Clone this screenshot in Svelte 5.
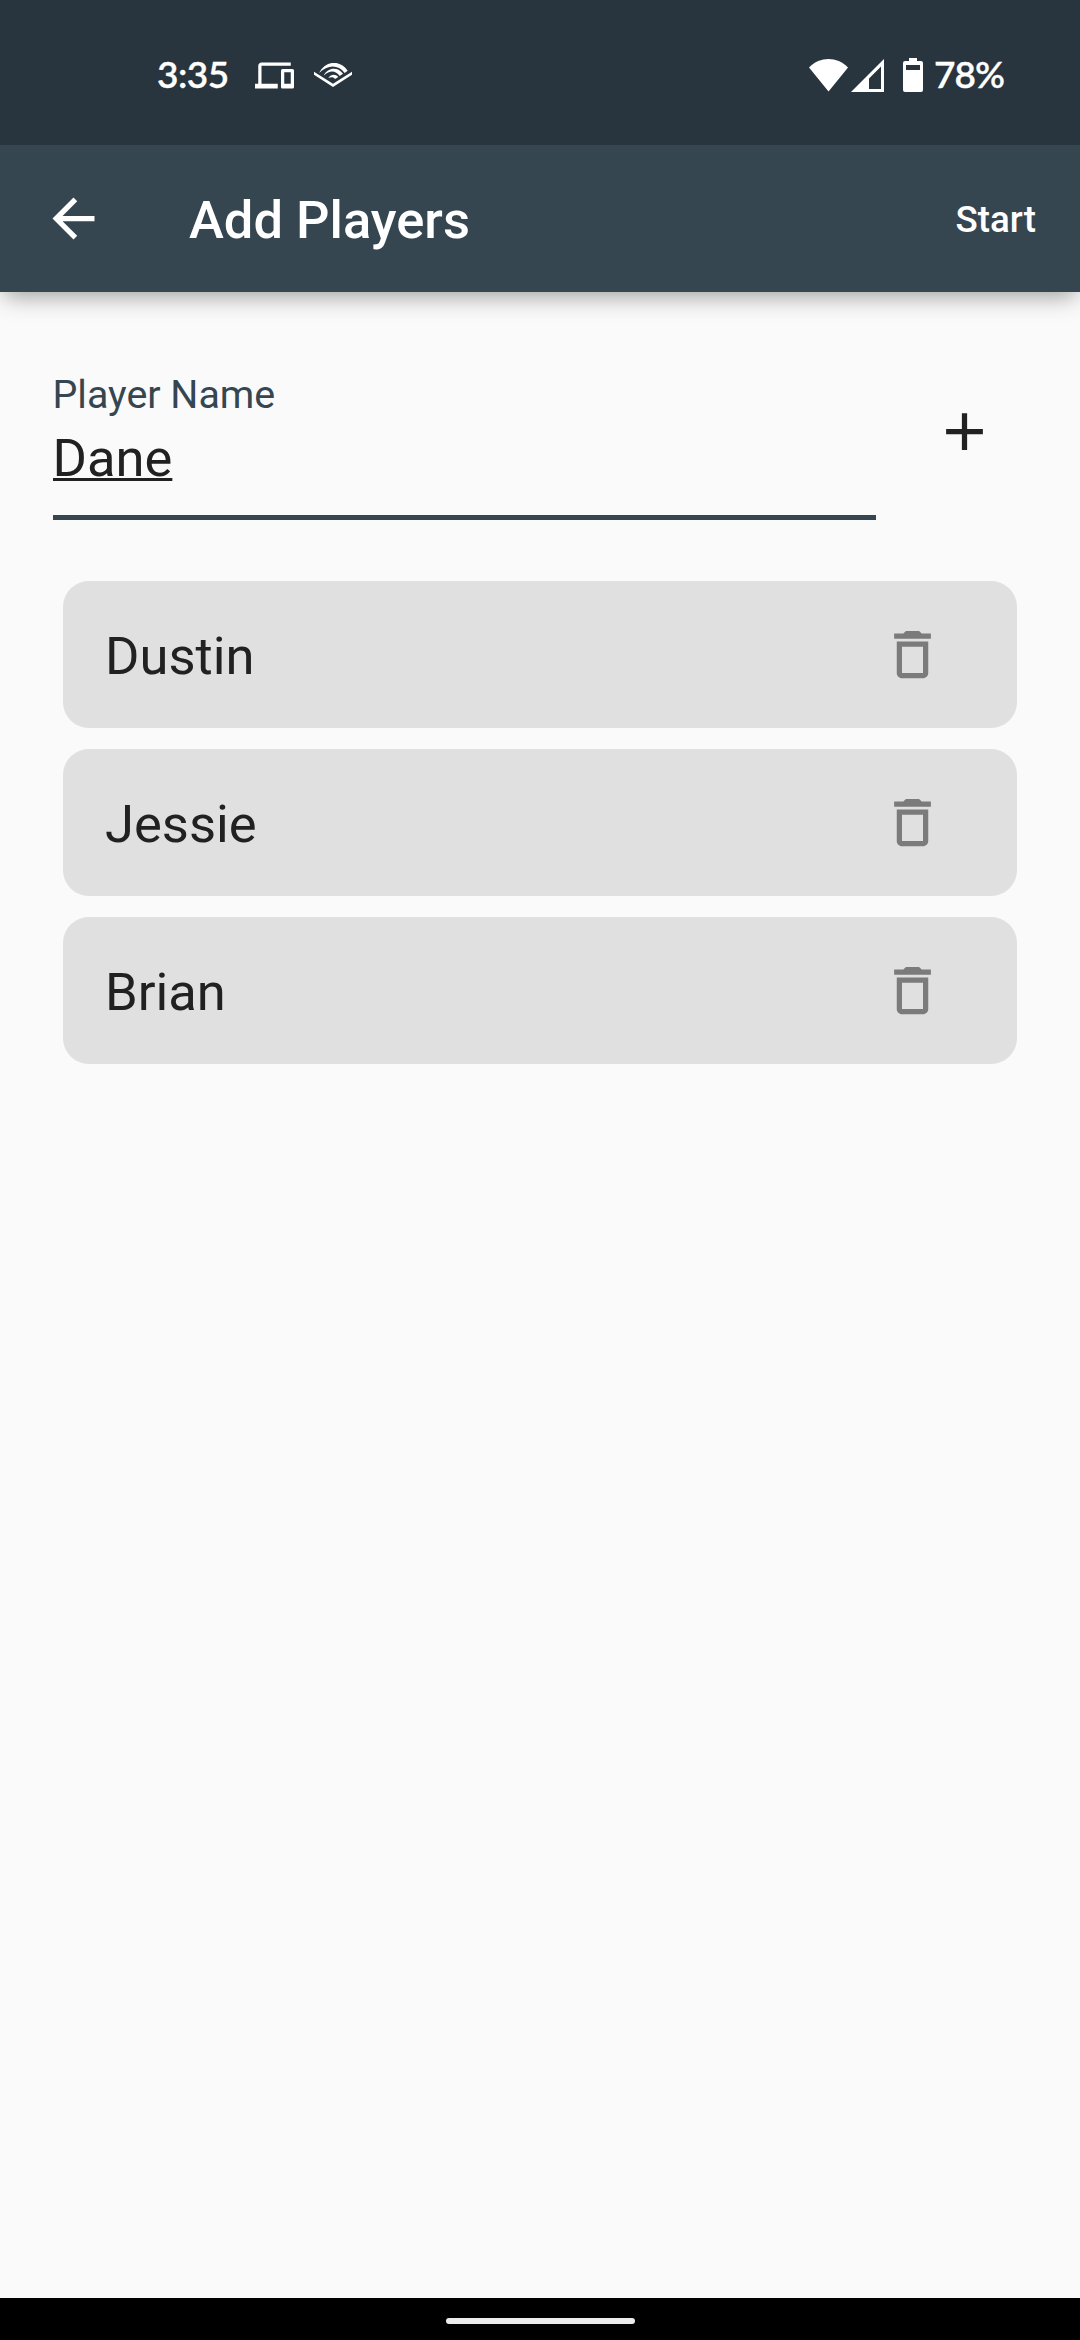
<script>
  let playerName = 'Dane';
  let players = ['Dustin', 'Jessie', 'Brian'];

  function addPlayer() {
    const name = playerName.trim();
    if (!name) return;
    players = [...players, name];
    playerName = '';
  }

  function removePlayer(index) {
    players = players.filter((_, i) => i !== index);
  }
</script>

<div class="screen">
  <div class="status-bar">
    <div class="status-left">
      <span class="clock">3:35</span>
      <svg class="devices" viewBox="0 4 24 16" fill="#fff">
        <path d="M4 6h18V4H4c-1.1 0-2 .9-2 2v11H0v3h14v-3H4V6zm19 2h-6c-.55 0-1 .45-1 1v10c0 .55.45 1 1 1h6c.55 0 1-.45 1-1V9c0-.55-.45-1-1-1zm-1 9h-4v-7h4v7z" />
      </svg>
      <svg class="audible" viewBox="0 0 114 72" fill="#fff">
        <path d="M0 26v9l57 37 57-37v-9L57 62z" />
        <path d="M15 30C36-10 80-9 101 23l-9 7C71 3 40 6 15 30z" />
        <path d="M29 38C42 10 74 12 87 32l-10 7C65 22 48 20 29 38z" />
        <path d="M43 45c9-13 22-11 30-3l-10 6c-4-6-11-7-20-3z" />
      </svg>
    </div>
    <div class="status-right">
      <svg class="wifi" viewBox="0 0 39 33" fill="#fff">
        <path d="M19.500 32.500L0 8.500C11-2.800 28-2.800 39 8.500z" />
      </svg>
      <svg class="signal" viewBox="0 0 33 33" fill="#fff">
        <path fill-rule="evenodd" d="M33 0v33H0zM30 7.500L18 19.500V30h12z" />
      </svg>
      <svg class="battery" viewBox="0 0 20 34" fill="#fff">
        <path fill-rule="evenodd" d="M6 0h8v3h4a2 2 0 0 1 2 2v27a2 2 0 0 1-2 2H2a2 2 0 0 1-2-2V5a2 2 0 0 1 2-2h4zM3 7v5h14V7z" />
      </svg>
      <span class="percent">78%</span>
    </div>
  </div>

  <header class="app-bar">
    <button class="back" aria-label="Back">
      <svg width="63" height="63" viewBox="0 0 24 24" fill="#fff">
        <path d="M20 11H7.830l5.590-5.590L12 4l-8 8 8 8 1.410-1.410L7.830 13H20v-2z" />
      </svg>
    </button>
    <h1>Add Players</h1>
    <button class="start">Start</button>
  </header>

  <main>
    <div class="entry">
      <label class="field">
        <span>Player Name</span>
        <input type="text" bind:value={playerName} spellcheck="false" />
      </label>
      <button class="add" aria-label="Add player" on:click={addPlayer}>
        <svg width="63" height="63" viewBox="0 0 24 24" fill="#212121">
          <path d="M19 13h-6v6h-2v-6H5v-2h6V5h2v6h6v2z" />
        </svg>
      </button>
    </div>

    <ul class="players">
      {#each players as player, i}
        <li>
          <span>{player}</span>
          <button aria-label="Remove {player}" on:click={() => removePlayer(i)}>
            <svg width="63" height="63" viewBox="0 0 24 24" fill="#7b7b7b">
              <path d="M6 19c0 1.100.9 2 2 2h8c1.100 0 2-.9 2-2V7H6v12zM8 9h8v10H8V9zm7.500-5l-1-1h-5l-1 1H5v2h14V4h-3.500z" />
            </svg>
          </button>
        </li>
      {/each}
    </ul>
  </main>

  <div class="nav-bar"><div class="handle"></div></div>
</div>

<style>
  :global(body) {
    margin: 0;
  }

  .screen {
    display: flex;
    flex-direction: column;
    width: 1080px;
    height: 2340px;
    overflow: hidden;
    background: #fafafa;
    color: #212121;
    font-family: Roboto, sans-serif;
  }

  svg {
    display: block;
    flex: none;
  }

  button {
    display: flex;
    align-items: center;
    justify-content: center;
    padding: 0;
    border: none;
    background: none;
    color: inherit;
    font-family: inherit;
    cursor: pointer;
  }

  .status-bar {
    box-sizing: border-box;
    display: flex;
    justify-content: space-between;
    flex: none;
    height: 145px;
    padding: 50px 76px 45px 157px;
    background: #29353e;
    color: #fff;
    font-family: Lato, sans-serif;
    font-size: 37px;
    font-weight: 600;
    line-height: 50px;
  }

  .status-left,
  .status-right {
    display: flex;
    align-items: center;
  }

  .clock,
  .percent {
    padding-bottom: 2px;
    -webkit-text-stroke: 0.3px #fff;
  }

  .clock {
    width: 98px;
    letter-spacing: -0.5px;
  }

  .devices {
    width: 39px;
    height: 27px;
  }

  .audible {
    width: 38px;
    height: 24px;
    margin-left: 20px;
  }

  .wifi {
    width: 39px;
    height: 33px;
  }

  .signal {
    width: 33px;
    height: 33px;
    margin-left: 3px;
  }

  .battery {
    width: 20px;
    height: 34px;
    margin: 0 11px 0 19px;
  }

  .percent {
    width: 70px;
    letter-spacing: -1px;
  }

  .app-bar {
    position: relative;
    box-sizing: border-box;
    display: flex;
    align-items: center;
    flex: none;
    height: 147px;
    padding: 0 44px 0 42px;
    background: #354651;
    color: #fff;
    box-shadow: 0 8px 22px -4px rgba(0, 0, 0, 0.38);
    clip-path: inset(0 0 -40px);
  }

  h1 {
    flex: 1;
    margin: 0 0 0 84px;
    padding-top: 2px;
    font-size: 52.5px;
    font-weight: 500;
    line-height: 62px;
  }

  .start {
    padding-top: 2px;
    font-size: 36.75px;
    font-weight: 500;
  }

  .entry {
    display: flex;
    padding: 73px 84px 0 52.5px;
  }

  .field {
    width: 823px;
    border-bottom: 5px solid #354651;
  }

  .field span {
    display: block;
    height: 60px;
    color: #354651;
    font-size: 39.375px;
    line-height: 60px;
  }

  input {
    display: block;
    box-sizing: border-box;
    width: 100%;
    height: 90px;
    padding: 0 0 24px;
    border: none;
    outline: none;
    background: none;
    color: #212121;
    font-family: inherit;
    font-size: 52.5px;
    line-height: 66px;
    text-decoration: underline;
    text-decoration-thickness: 3px;
    text-underline-offset: 2px;
    text-decoration-skip-ink: none;
  }

  .add {
    width: 63px;
    height: 63px;
    margin: 35px 0 0 57.5px;
  }

  .players {
    display: flex;
    flex-direction: column;
    gap: 21px;
    margin: 61px 63px 0;
    padding: 0;
    list-style: none;
  }

  li {
    box-sizing: border-box;
    display: flex;
    align-items: center;
    justify-content: space-between;
    height: 147px;
    padding: 0 73px 0 42px;
    border-radius: 26px;
    background: #e0e0e0;
    font-size: 52.5px;
  }

  li span {
    padding-top: 2px;
  }

  .nav-bar {
    display: flex;
    align-items: center;
    justify-content: center;
    height: 42px;
    margin-top: auto;
    background: #000;
  }

  .handle {
    width: 189px;
    height: 6px;
    margin-top: 4px;
    border-radius: 3px;
    background: #ececec;
  }
</style>
